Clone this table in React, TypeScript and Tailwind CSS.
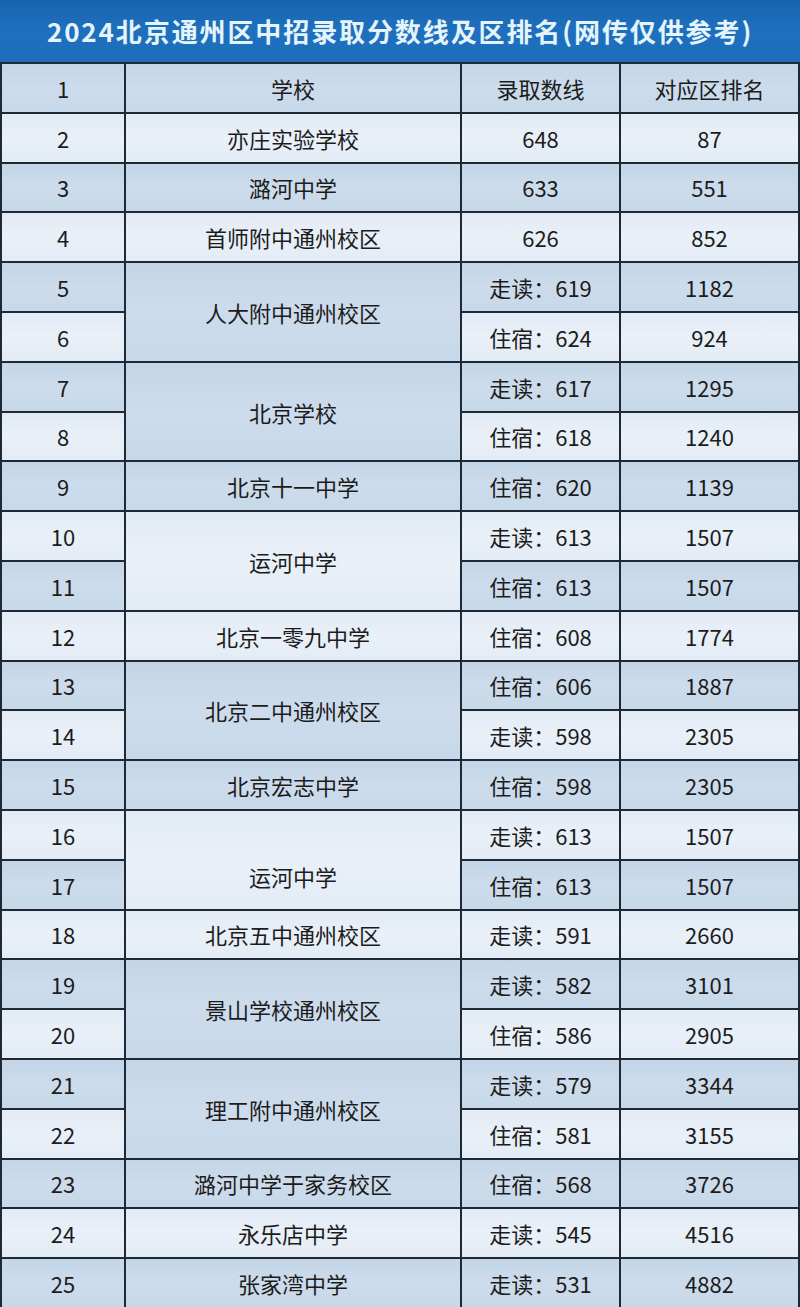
import { Fragment } from "react";

type Line = { n: number; score: string; rank: string };
type Group = { school: string; dark: boolean; lines: Line[]; low?: boolean };

const groups: Group[] = [
  { school: "学校", dark: true, lines: [{ n: 1, score: "录取数线", rank: "对应区排名" }] },
  { school: "亦庄实验学校", dark: false, lines: [{ n: 2, score: "648", rank: "87" }] },
  { school: "潞河中学", dark: true, lines: [{ n: 3, score: "633", rank: "551" }] },
  { school: "首师附中通州校区", dark: false, lines: [{ n: 4, score: "626", rank: "852" }] },
  {
    school: "人大附中通州校区",
    dark: true,
    lines: [
      { n: 5, score: "走读：619", rank: "1182" },
      { n: 6, score: "住宿：624", rank: "924" },
    ],
  },
  {
    school: "北京学校",
    dark: true,
    lines: [
      { n: 7, score: "走读：617", rank: "1295" },
      { n: 8, score: "住宿：618", rank: "1240" },
    ],
  },
  { school: "北京十一中学", dark: true, lines: [{ n: 9, score: "住宿：620", rank: "1139" }] },
  {
    school: "运河中学",
    dark: false,
    lines: [
      { n: 10, score: "走读：613", rank: "1507" },
      { n: 11, score: "住宿：613", rank: "1507" },
    ],
  },
  { school: "北京一零九中学", dark: false, lines: [{ n: 12, score: "住宿：608", rank: "1774" }] },
  {
    school: "北京二中通州校区",
    dark: true,
    lines: [
      { n: 13, score: "住宿：606", rank: "1887" },
      { n: 14, score: "走读：598", rank: "2305" },
    ],
  },
  { school: "北京宏志中学", dark: true, lines: [{ n: 15, score: "住宿：598", rank: "2305" }] },
  {
    school: "运河中学",
    dark: false,
    low: true,
    lines: [
      { n: 16, score: "走读：613", rank: "1507" },
      { n: 17, score: "住宿：613", rank: "1507" },
    ],
  },
  { school: "北京五中通州校区", dark: false, lines: [{ n: 18, score: "走读：591", rank: "2660" }] },
  {
    school: "景山学校通州校区",
    dark: true,
    lines: [
      { n: 19, score: "走读：582", rank: "3101" },
      { n: 20, score: "住宿：586", rank: "2905" },
    ],
  },
  {
    school: "理工附中通州校区",
    dark: true,
    lines: [
      { n: 21, score: "走读：579", rank: "3344" },
      { n: 22, score: "住宿：581", rank: "3155" },
    ],
  },
  { school: "潞河中学于家务校区", dark: true, lines: [{ n: 23, score: "住宿：568", rank: "3726" }] },
  { school: "永乐店中学", dark: false, lines: [{ n: 24, score: "走读：545", rank: "4516" }] },
  { school: "张家湾中学", dark: true, lines: [{ n: 25, score: "走读：531", rank: "4882" }] },
];

const DARK = "bg-gradient-to-b from-[#c3d5e7] via-[#cddcec] to-[#c6d8e9]";
const LIGHT = "bg-gradient-to-b from-[#e2eaf4] via-[#e9f0f8] to-[#e3ebf5]";

function Cell({ dark, children, className = "" }: { dark: boolean; children?: React.ReactNode; className?: string }) {
  return (
    <div className={`flex items-center justify-center ${dark ? DARK : LIGHT} ${className}`}>
      {children}
    </div>
  );
}

export default function App() {
  return (
    <div
      className="w-[800px] h-[1307px] overflow-hidden bg-[#1e2935] text-[#1c1c1c]"
      style={{ fontFamily: '"Noto Sans CJK SC", "Noto Sans", sans-serif' }}
    >
      {/* title bar */}
      <div className="h-[62px] flex items-center justify-center bg-gradient-to-b from-[#1963ae] via-[#1e70bf] to-[#1d6dba]">
        <h1 className="text-[26px] font-bold tracking-[1.9px] text-[#e3f4fb] leading-none">
          2024北京通州区中招录取分数线及区排名(网传仅供参考)
        </h1>
      </div>

      {/* table */}
      <div className="grid grid-cols-[122px_334px_157px_177px] grid-rows-[repeat(25,minmax(0,1fr))] gap-[2px] px-[2px] pt-[2px] h-[1245px] text-[22px] leading-none">
        {groups.map((g, gi) =>
          g.lines.map((l, li) => (
            <Fragment key={`${gi}-${li}`}>
              <Cell dark={l.n % 2 === 1}>{l.n}</Cell>
              {li === 0 && (
                <Cell dark={g.dark} className={`${g.lines.length > 1 ? "row-span-2" : ""} ${g.low ? "pt-8" : ""}`}>
                  {g.school}
                </Cell>
              )}
              <Cell dark={l.n % 2 === 1}>{l.score}</Cell>
              <Cell dark={l.n % 2 === 1}>{l.rank}</Cell>
            </Fragment>
          ))
        )}
      </div>
    </div>
  );
}
